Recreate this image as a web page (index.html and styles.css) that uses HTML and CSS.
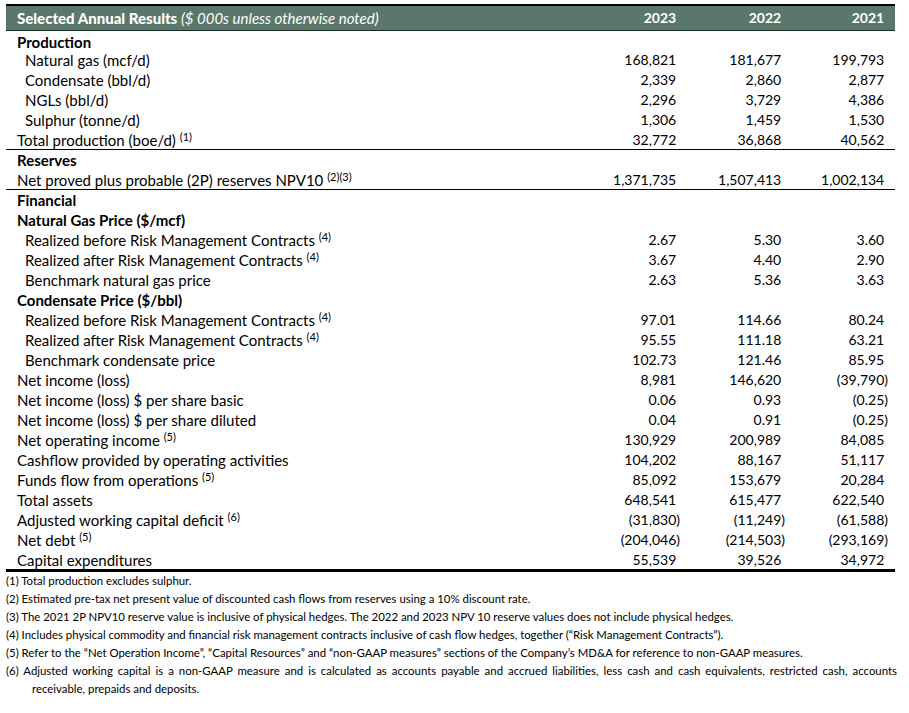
FILE: index.html
```html
<!DOCTYPE html>
<html>
<head>
<meta charset="utf-8">
<link rel="stylesheet" href="styles.css">
</head>
<body>
<div class="sheet">
  <div class="tbl">
    <div class="row head">
      <div class="lab sec"><b>Selected Annual Results</b> <i>($ 000s unless otherwise noted)</i></div>
      <div class="v">2023</div><div class="v">2022</div><div class="v">2021</div>
    </div>
    <div class="row first"><div class="lab sec b">Production</div><div></div><div></div><div></div></div>
    <div class="row"><div class="lab sub">Natural gas (mcf/d)</div><div class="v">168,821</div><div class="v">181,677</div><div class="v">199,793</div></div>
    <div class="row"><div class="lab sub">Condensate (bbl/d)</div><div class="v">2,339</div><div class="v">2,860</div><div class="v">2,877</div></div>
    <div class="row"><div class="lab sub">NGLs (bbl/d)</div><div class="v">2,296</div><div class="v">3,729</div><div class="v">4,386</div></div>
    <div class="row"><div class="lab sub">Sulphur (tonne/d)</div><div class="v">1,306</div><div class="v">1,459</div><div class="v">1,530</div></div>
    <div class="row line"><div class="lab sec">Total production (boe/d) <sup>(1)</sup></div><div class="v">32,772</div><div class="v">36,868</div><div class="v">40,562</div></div>
    <div class="row"><div class="lab sec b">Reserves</div><div></div><div></div><div></div></div>
    <div class="row line"><div class="lab sec">Net proved plus probable (2P) reserves NPV10 <sup>(2)(3)</sup></div><div class="v">1,371,735</div><div class="v">1,507,413</div><div class="v">1,002,134</div></div>
    <div class="row"><div class="lab sec b">Financial</div><div></div><div></div><div></div></div>
    <div class="row"><div class="lab sec b">Natural Gas Price ($/mcf)</div><div></div><div></div><div></div></div>
    <div class="row"><div class="lab sub">Realized before Risk Management Contracts <sup>(4)</sup></div><div class="v">2.67</div><div class="v">5.30</div><div class="v">3.60</div></div>
    <div class="row"><div class="lab sub">Realized after Risk Management Contracts <sup>(4)</sup></div><div class="v">3.67</div><div class="v">4.40</div><div class="v">2.90</div></div>
    <div class="row"><div class="lab sub">Benchmark natural gas price</div><div class="v">2.63</div><div class="v">5.36</div><div class="v">3.63</div></div>
    <div class="row"><div class="lab sec b">Condensate Price ($/bbl)</div><div></div><div></div><div></div></div>
    <div class="row"><div class="lab sub">Realized before Risk Management Contracts <sup>(4)</sup></div><div class="v">97.01</div><div class="v">114.66</div><div class="v">80.24</div></div>
    <div class="row"><div class="lab sub">Realized after Risk Management Contracts <sup>(4)</sup></div><div class="v">95.55</div><div class="v">111.18</div><div class="v">63.21</div></div>
    <div class="row"><div class="lab sub">Benchmark condensate price</div><div class="v">102.73</div><div class="v">121.46</div><div class="v">85.95</div></div>
    <div class="row"><div class="lab sec">Net income (loss)</div><div class="v">8,981</div><div class="v">146,620</div><div class="v neg">(39,790)</div></div>
    <div class="row"><div class="lab sec">Net income (loss) $ per share basic</div><div class="v">0.06</div><div class="v">0.93</div><div class="v neg">(0.25)</div></div>
    <div class="row"><div class="lab sec">Net income (loss) $ per share diluted</div><div class="v">0.04</div><div class="v">0.91</div><div class="v neg">(0.25)</div></div>
    <div class="row"><div class="lab sec">Net operating income <sup>(5)</sup></div><div class="v">130,929</div><div class="v">200,989</div><div class="v">84,085</div></div>
    <div class="row"><div class="lab sec">Cashflow provided by operating activities</div><div class="v">104,202</div><div class="v">88,167</div><div class="v">51,117</div></div>
    <div class="row"><div class="lab sec">Funds flow from operations <sup>(5)</sup></div><div class="v">85,092</div><div class="v">153,679</div><div class="v">20,284</div></div>
    <div class="row"><div class="lab sec">Total assets</div><div class="v">648,541</div><div class="v">615,477</div><div class="v">622,540</div></div>
    <div class="row"><div class="lab sec">Adjusted working capital deficit <sup>(6)</sup></div><div class="v neg">(31,830)</div><div class="v neg">(11,249)</div><div class="v neg">(61,588)</div></div>
    <div class="row"><div class="lab sec">Net debt <sup>(5)</sup></div><div class="v neg">(204,046)</div><div class="v neg">(214,503)</div><div class="v neg">(293,169)</div></div>
    <div class="row last"><div class="lab sec">Capital expenditures</div><div class="v">55,539</div><div class="v">39,526</div><div class="v">34,972</div></div>
  </div>
  <div class="notes">
    <div class="fn">(1) Total production excludes sulphur.</div>
    <div class="fn">(2) Estimated pre-tax net present value of discounted cash flows from reserves using a 10% discount rate.</div>
    <div class="fn">(3) The 2021 2P NPV10 reserve value is inclusive of physical hedges. The 2022 and 2023 NPV 10 reserve values does not include physical hedges.</div>
    <div class="fn">(4) Includes physical commodity and financial risk management contracts inclusive of cash flow hedges, together (“Risk Management Contracts”).</div>
    <div class="fn">(5) Refer to the “Net Operation Income”, “Capital Resources” and “non-GAAP measures” sections of the Company’s MD&amp;A for reference to non-GAAP measures.</div>
    <div class="fn fn6"><span class="l1">(6) Adjusted working capital is a non-GAAP measure and is calculated as accounts payable and accrued liabilities, less cash and cash equivalents, restricted cash, accounts</span><span class="l2">receivable, prepaids and deposits.</span></div>
  </div>
</div>
</body>
</html>
```
FILE: styles.css
```css
* { box-sizing: border-box; }
html, body { margin: 0; padding: 0; background: #ffffff; }
body {
  font-family: Lato, "Liberation Sans", sans-serif;
  color: #000000;
}
.sheet {
  width: 909px;
  padding: 4px 0 0 6px;
}
.tbl {
  width: 889px;
  border-top: 2px solid #000000;
}
.row {
  display: grid;
  grid-template-columns: 1fr 105px 105px 103px;
  height: 20px;
  line-height: 20px;
  font-size: 14px;
  white-space: nowrap;
}
.lab { font-size: 15px; }
.row.head {
  height: 25px;
  line-height: 24px;
  background: #5a776b;
  color: #ffffff;
  border-bottom: 1px solid #1c2a24;
  font-weight: 700;
}
.row.head i { font-weight: 400; font-style: italic; }
.row.first { height: 19px; line-height: 22px; }
.row.line { border-bottom: 1px solid #000000; }
.row.last { border-bottom: 3px solid #000000; height: 22px; }
.lab.sec { padding-left: 11px; }
.lab.sub { padding-left: 19px; }
.b { font-weight: 700; }
.v {
  text-align: right;
  padding-right: 7px;
}
.v::after { content: ")"; visibility: hidden; }
.v.neg::after { content: none; }
sup {
  font-size: 11px;
  line-height: 0;
  vertical-align: 5px;
}
.notes {
  width: 891px;
  font-size: 11.4px;
  line-height: 18px;
}
.fn { white-space: nowrap; }
.fn6 { white-space: normal; }
.fn6 .l1 {
  display: block;
  white-space: nowrap;
  text-align: justify;
  text-align-last: justify;
}
.fn6 .l2 {
  display: block;
  padding-left: 26px;
  line-height: 17px;
}
```
